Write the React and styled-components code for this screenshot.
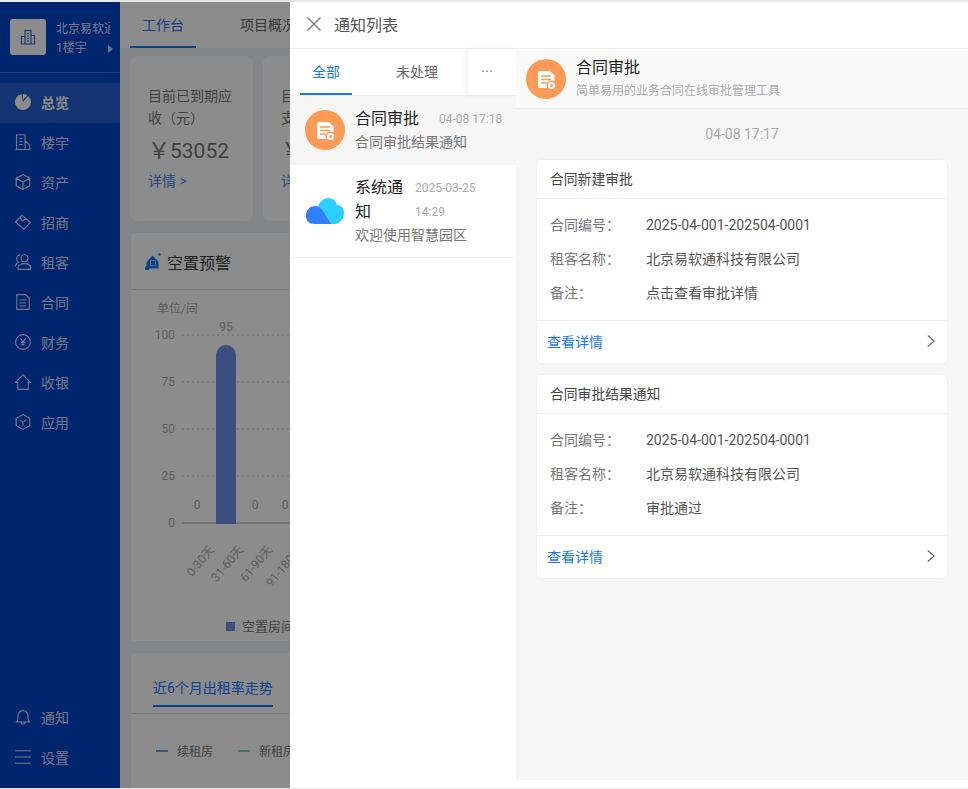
import React from "react";
import styled, { createGlobalStyle } from "styled-components";

const Global = createGlobalStyle`
  html, body { margin: 0; padding: 0; background: #fff; }
  body { font-family: Roboto, "Noto Sans CJK SC", sans-serif; font-size: 14px; color: #333; }
  * { box-sizing: border-box; }
`;

const Page = styled.div`
  position: relative;
  width: 968px;
  height: 789px;
  overflow: hidden;
  background: #fff;
  border-top: 2px solid #e8e8e8;
  border-bottom: 1px solid #e8e8e8;
`;
const Shell = styled.div`
  display: flex;
  height: 100%;
  background: #f1f2f4;
`;
const Sidebar = styled.aside`
  flex: none;
  width: 120px;
  display: flex;
  flex-direction: column;
  background: #0044ca;
  color: rgba(255, 255, 255, 0.82);
`;
const Org = styled.div`
  height: 71px;
  flex: none;
  display: flex;
  gap: 10px;
  padding: 17px 0 0 10px;
  border-bottom: 1px solid rgba(255, 255, 255, 0.25);
  margin-bottom: 10px;
`;
const OrgLogo = styled.div`
  flex: none;
  width: 36px;
  height: 36px;
  border-radius: 3px;
  background: #fff;
  color: #1a5fd0;
  display: flex;
  align-items: center;
  justify-content: center;
`;
const OrgText = styled.div`
  width: 54px;
  font-size: 12px;
  line-height: 20px;
  display: flex;
  flex-direction: column;
  overflow: hidden;
  white-space: nowrap;
`;
const OrgSub = styled.div`
  margin-top: -1px;
`;
const Caret = styled.i`
  position: absolute;
  left: 108px;
  top: 43px;
  width: 0;
  height: 0;
  border-left: 5px solid rgba(255, 255, 255, 0.75);
  border-top: 4px solid transparent;
  border-bottom: 4px solid transparent;
`;
const NavRow = styled.div`
  height: 40px;
  flex: none;
  display: flex;
  align-items: center;
  gap: 10px;
  padding: 0 0 2px 15px;
  font-size: 14px;
  font-weight: ${(p) => (p.$active ? 700 : 400)};
  color: ${(p) => (p.$active ? "#fff" : "inherit")};
  background: ${(p) => (p.$active ? "rgba(255,255,255,.14)" : "transparent")};
`;
const NavSpacer = styled.div`
  flex: 1;
`;
const NavBottom = styled.div`
  padding-bottom: 10px;
`;
const Main = styled.main`
  flex: none;
  width: 170px;
  overflow: hidden;
`;
const TopTabs = styled.div`
  height: 46px;
  width: 420px;
  display: flex;
  padding-left: 10px;
  background: #fff;
`;
const TopTab = styled.div`
  flex: none;
  width: ${(p) => p.$w}px;
  text-align: center;
  line-height: 46px;
  margin-right: ${(p) => p.$mr || 0}px;
  font-size: 14px;
  color: ${(p) => (p.$active ? "#1f74f0" : "#666")};
  border-bottom: 2px solid ${(p) => (p.$active ? "#1677ff" : "transparent")};
`;
const Stats = styled.div`
  display: flex;
  gap: 10px;
  padding: 8px 0 12px 10px;
`;
const StatCard = styled.div`
  flex: none;
  width: 123px;
  height: 165px;
  border-radius: 8px;
  background: #fff;
  padding: 29px 0 0 18px;
`;
const StatLabel = styled.div`
  width: 90px;
  font-size: 14px;
  line-height: 22px;
  color: #777;
`;
const StatValue = styled.div`
  font-size: 21px;
  line-height: 30px;
  margin-top: 7px;
  color: #777;
  white-space: nowrap;
  &::first-letter { font-size: 22px; }
`;
const StatLink = styled.div`
  font-size: 14px;
  line-height: 22px;
  margin-top: 4px;
  color: #3d86f5;
`;
const Panel = styled.section`
  width: 420px;
  height: ${(p) => p.$h}px;
  margin: 0 0 12px 11px;
  border-radius: 4px;
  background: #fff;
  overflow: hidden;
`;
const PanelHead = styled.div`
  height: 57px;
  display: flex;
  align-items: center;
  gap: 6px;
  padding: 2px 0 0 14px;
  font-size: 16px;
  color: #3c3c3c;
  border-bottom: 1px solid #e4e4e4;
`;
const PanelTabs = styled.div`
  height: 61px;
  padding: 18px 0 0 22px;
  border-bottom: 1px solid #e4e4e4;
`;
const PanelTab = styled.span`
  display: inline-block;
  height: 36px;
  line-height: 34px;
  font-size: 14px;
  color: #1677ff;
  border-bottom: 2px solid #1677ff;
`;
const LineLegend = styled.div`
  display: flex;
  gap: 25px;
  padding: 28px 0 0 25px;
  font-size: 12px;
  color: #777;
`;
const LegendItem = styled.span`
  display: flex;
  align-items: center;
  gap: 9px;
  white-space: nowrap;
  &::before {
    content: "";
    width: 12px;
    height: 2px;
    background: ${(p) => p.$c};
  }
`;
const Scrim = styled.div`
  position: absolute;
  inset: 0;
  background: rgba(0, 0, 0, 0.45);
`;
const Drawer = styled.div`
  position: absolute;
  top: 0;
  bottom: 0;
  left: 290px;
  right: 0;
  display: flex;
  flex-direction: column;
  background: #fff;
`;
const DrawerHead = styled.header`
  height: 47px;
  flex: none;
  display: flex;
  align-items: center;
  gap: 13px;
  padding: 0 0 2px 17px;
  border-bottom: 1px solid #eee;
  font-size: 16px;
  color: #555;
  svg { color: #777; }
`;
const DrawerBody = styled.div`
  flex: 1;
  min-height: 0;
  display: flex;
`;
const ListCol = styled.div`
  flex: none;
  width: 226px;
`;
const TabBar = styled.div`
  height: 47px;
  display: flex;
  border-bottom: 1px solid #eee;
  position: relative;
`;
const ListTab = styled.div`
  flex: none;
  width: ${(p) => p.$w}px;
  margin-left: ${(p) => p.$ml || 0}px;
  text-align: center;
  line-height: 46px;
  height: 46px;
  font-size: 14px;
  color: ${(p) => (p.$active ? "#1677ff" : "#666")};
  border-bottom: 2px solid ${(p) => (p.$active ? "#1677ff" : "transparent")};
`;
const MoreTab = styled.div`
  position: absolute;
  right: 0;
  top: 0;
  bottom: 0;
  width: 48px;
  padding-right: 10px;
  text-align: center;
  line-height: 47px;
  font-size: 15px;
  color: #777;
  background: #fff;
  box-shadow: -3px 0 5px rgba(0, 0, 0, 0.05);
`;
const Item = styled.div`
  display: flex;
  align-items: ${(p) => (p.$tall ? "center" : "flex-start")};
  gap: ${(p) => (p.$tall ? 11 : 10)}px;
  height: ${(p) => p.$h}px;
  padding: ${(p) => (p.$tall ? "0 0 0 16px" : "14px 0 0 15px")};
  background: ${(p) => (p.$active ? "#f6f6f6" : "#fff")};
  border-bottom: ${(p) => (p.$active ? "0" : "1px solid #f2f2f2")};
`;
const ItemText = styled.div`
  flex: 1;
  min-width: 0;
  margin-top: ${(p) => p.$mt || 0}px;
`;
const ItemTop = styled.div`
  display: flex;
  align-items: flex-start;
`;
const ItemTitle = styled.div`
  flex: none;
  width: ${(p) => p.$w}px;
  font-size: 16px;
  line-height: 24px;
  color: #222;
`;
const ItemDate = styled.div`
  width: ${(p) => p.$w}px;
  font-size: 12px;
  line-height: 24px;
  color: #aaa;
  white-space: ${(p) => (p.$wrap ? "normal" : "nowrap")};
`;
const ItemSub = styled.div`
  font-size: 14px;
  line-height: 22px;
  color: #777;
  white-space: nowrap;
`;
const Avatar = styled.div`
  flex: none;
  width: 40px;
  height: 40px;
  border-radius: 50%;
  background: #ff9a57;
  display: flex;
`;
const CloudBox = styled.div`
  flex: none;
  display: flex;
`;
const Detail = styled.div`
  flex: 1;
  display: flex;
  flex-direction: column;
  margin-bottom: 8px;
  background: #f6f6f6;
`;
const DetailHead = styled.div`
  height: 60px;
  flex: none;
  display: flex;
  align-items: center;
  gap: 10px;
  padding-left: 10px;
  background: #fafafa;
  border-bottom: 1px solid #eee;
`;
const DetailCopy = styled.div`
  padding-top: 2px;
`;
const DetailTitle = styled.div`
  font-size: 16px;
  line-height: 20px;
  color: #222;
  margin-bottom: 3px;
`;
const DetailSub = styled.div`
  font-size: 12px;
  line-height: 20px;
  color: #aaa;
`;
const Stamp = styled.div`
  text-align: center;
  font-size: 14px;
  line-height: 20px;
  color: #aaa;
  margin: 15px 0 16px;
`;
const Cards = styled.div`
  display: flex;
  flex-direction: column;
  gap: 12px;
  padding: 0 21px;
`;
const Card = styled.article`
  height: 203px;
  border-radius: 5px;
  background: #fff;
  box-shadow: 0 0 2px rgba(0, 0, 0, 0.08);
  display: flex;
  flex-direction: column;
`;
const CardTitle = styled.div`
  height: 39px;
  flex: none;
  padding-left: 13px;
  line-height: 38px;
  font-size: 13.8px;
  color: #444;
  border-bottom: 1px solid #efefef;
`;
const CardRows = styled.div`
  flex: 1;
  padding: 9px 13px 0;
  border-bottom: 1px solid #efefef;
`;
const Row = styled.div`
  display: flex;
  height: 34px;
  line-height: 34px;
  font-size: 14px;
`;
const RowLabel = styled.div`
  flex: none;
  width: 96px;
  color: #777;
`;
const RowValue = styled.div`
  color: #555;
`;
const CardFoot = styled.div`
  height: 42px;
  flex: none;
  display: flex;
  align-items: center;
  justify-content: space-between;
  padding: 0 12px 2px 10px;
  font-size: 14px;
  color: #1677ff;
  svg { color: #666; }
`;

const line = { fill: "none", stroke: "currentColor", strokeWidth: 1.1 };
const Ico = ({ children }) => (
  <svg width="16" height="16" viewBox="0 0 16 16" {...line}>{children}</svg>
);
const PieIcon = () => (
  <svg width="16" height="16" viewBox="0 0 16 16">
    <path d="M8 8 L13 1.900 A8 8 0 1 1 3 1.800 A8 8 0 0 1 6.500 .2 Z" fill="currentColor" />
    <path d="M8 0 A8 8 0 0 1 12.200 1.200 L8 6 Z" fill="currentColor" />
  </svg>
);
const BuildingIcon = () => <Ico><path d="M.5 15.500h15M1.500 15.500V.7h8.600v14.800M10.100 7l4.600 4v4.500M4 4.500h3.600M4 7.500h3.600M4 10.500h3.600" /></Ico>;
const BoxIcon = () => <Ico><path d="M8 .6 14.800 4.200v7.600L8 15.400 1.200 11.800V4.200ZM1.200 4.200 8 8l6.800-3.800M8 8v7.400" /></Ico>;
const TagIcon = () => <Ico><path d="M.5 8 7 1.300 15.500 8.300 9 15.200ZM5 3.400 7.200 7l3.700-2.300" /></Ico>;
const UsersIcon = () => (
  <Ico>
    <circle cx="9.500" cy="4.300" r="3.500" />
    <path d="M3 15.400v-1.900C3 11 6 9.600 9.500 9.600s6 1.400 6 3.900v1.900ZM5.200.9C3 1.300 1.700 3 1.700 4.800c0 1.400.7 2.500 1.700 3.200C1.500 9 .5 10.500.5 12.600" />
  </Ico>
);
const DocIcon = () => <Ico><path d="M1.800.6h8.700L14.200 4v11.400H1.800ZM4.500 6H11M4.500 9H11M4.500 12H11" /></Ico>;
const YenIcon = () => (
  <Ico>
    <circle cx="8" cy="8" r="7.400" />
    <path d="M5.400 4.400 8 8l2.600-3.600M8 8v3.800M5.600 8.400h4.800M5.600 10.200h4.800" />
  </Ico>
);
const HouseIcon = () => <Ico><path d="M.6 8.400 8 .8l7.400 7.600h-2.200v7H2.800v-7Z" /></Ico>;
const HexIcon = () => <Ico><path d="M8 .6 14.800 4.300v7.400L8 15.400 1.200 11.700V4.300ZM4.600 5.800 8 8.200l3.400-2.400M8 8.200v3.600" /></Ico>;
const BellIcon = () => <Ico><path d="M1.500 13C3 11.500 3 10 3 7c0-3.500 2-5.200 5-5.200S13 3.500 13 7c0 3 0 4.500 1.500 6ZM6 13.500c0 2 4 2 4 0M8 .4v1.400" /></Ico>;
const MenuIcon = () => <Ico><path d="M0 1.700h16M0 8h16M0 14.300h16" /></Ico>;
const OrgIcon = () => <Ico><path d="M.5 15h15M1.500 15V7.500h3.600M5 15V1.500h6V15M11 6.500h3.500V15M7 4.500h2M7 7h2M7 9.500h2M7 12h2" /></Ico>;
const CloseIcon = () => (
  <svg width="14" height="14" viewBox="0 0 14 14" fill="none" stroke="currentColor" strokeWidth="1.300">
    <path d="M.5.5l13 13M13.500.5l-13 13" />
  </svg>
);
const Chevron = () => (
  <svg width="8" height="12" viewBox="0 0 8 12" fill="none" stroke="currentColor" strokeWidth="1.200">
    <path d="M.8.5 7.200 6 .8 11.500" />
  </svg>
);
const ContractIcon = () => (
  <svg width="40" height="40" viewBox="0 0 40 40">
    <path d="M14 12h10l4.500 4.500V29H14a2 2 0 0 1-2-2V14a2 2 0 0 1 2-2Z" fill="#fff" />
    <path d="M15 17h10M15 20.500h10M15 24h6" stroke="#ff9a57" strokeWidth="1.600" />
    <circle cx="25.500" cy="26.500" r="5" fill="#ff9a57" />
    <circle cx="25.500" cy="26.500" r="3.600" fill="#fff" />
    <circle cx="25.500" cy="26.500" r="1.500" fill="#ff9a57" />
  </svg>
);
const CloudIcon = () => (
  <svg width="38" height="27" viewBox="0 0 38 27">
    <path d="M12 8C14 3 18 0 22 0c5 0 8 3 9 7 4 0 7 3.500 7 8 0 6-4 11-10 11h-4Z" fill="#2cd0ff" />
    <path d="M0 18c0-6 4-10 9-10 4 0 6 2 8 5l8 13H8c-5 0-8-3.500-8-8Z" fill="#2f7fff" />
  </svg>
);
const VacancyIcon = () => (
  <svg width="16" height="18" viewBox="0 0 16 18">
    <path d="M1.500 9.500 7.500 2.500l6 6v7H5l-1.500 1.500H1.500A1.500 1.500 0 0 1 0 15.500C0 14 1 13.500 1.500 13Z" fill="#1677ff" />
    <rect x="5.500" y="7.500" width="5" height="5" fill="none" stroke="#bcd6ff" strokeWidth=".8" />
    <circle cx="14.500" cy="1.500" r="1.200" fill="#1677ff" />
  </svg>
);

const nav = [
  ["总览", <PieIcon />],
  ["楼宇", <BuildingIcon />],
  ["资产", <BoxIcon />],
  ["招商", <TagIcon />],
  ["租客", <UsersIcon />],
  ["合同", <DocIcon />],
  ["财务", <YenIcon />],
  ["收银", <HouseIcon />],
  ["应用", <HexIcon />],
];

const ticks = [[100, 333], [75, 380], [50, 427], [25, 474], [0, 521]];
const zeros = [197, 255, 285];
const cats = [["0-30天", 197], ["31-60天", 226], ["61-90天", 255], ["91-180天", 285]];

const VacancyChart = () => (
  <svg display="block" width="420" height="351" viewBox="131 290 420 351" fontFamily="Roboto, Noto Sans CJK SC, sans-serif" fontSize="12" fill="#aaa">
    <text x="157" y="313">单位/间</text>
    {ticks.map(([v, y]) => (
      <g key={v}>
        <text x="175" y={y + 6} textAnchor="end">{v}</text>
        <line x1="182" x2="551" y1={y + 2} y2={y + 2} stroke={v === 0 ? "#aaa" : "#c8c8c8"} strokeDasharray={v === 0 ? "none" : "2 3"} />
      </g>
    ))}
    <path d="M216 524V355a10 10 0 0 1 20 0V524Z" fill="#6a8fe8" />
    <text x="226" y="331" textAnchor="middle">95</text>
    {zeros.map((x) => (
      <text key={x} x={x} y="509" textAnchor="middle">0</text>
    ))}
    {cats.map(([c, x]) => (
      <text key={c} transform={`translate(${x + 18} 550) rotate(-50)`} textAnchor="end">{c}</text>
    ))}
    <rect x="226" y="622" width="9" height="9" fill="#6a8fe8" />
    <text x="242" y="631" fontSize="13" fill="#777">空置房间</text>
  </svg>
);

const cards = [
  { title: "合同新建审批", tenant: "北京易软通科技有限公司", note: "点击查看审批详情" },
  { title: "合同审批结果通知", tenant: "北京易软通科技有限公司", note: "审批通过" },
];

export default function App() {
  return (
    <Page>
      <Global />
      <Shell>
        <Sidebar>
          <Org>
            <OrgLogo><OrgIcon /></OrgLogo>
            <OrgText>
              <span>北京易软通</span>
              <OrgSub>1楼宇</OrgSub>
            </OrgText>
            <Caret />
          </Org>
          {nav.map(([t, icon], i) => (
            <NavRow key={t} $active={i === 0}>{icon}{t}</NavRow>
          ))}
          <NavSpacer />
          <NavBottom>
            <NavRow><BellIcon />通知</NavRow>
            <NavRow><MenuIcon />设置</NavRow>
          </NavBottom>
        </Sidebar>
        <Main>
          <TopTabs>
            <TopTab $active $w={66} $mr={22}>工作台</TopTab>
            <TopTab $w={100}>项目概况</TopTab>
          </TopTabs>
          <Stats>
            <StatCard>
              <StatLabel>目前已到期应收（元）</StatLabel>
              <StatValue>￥53052</StatValue>
              <StatLink>详情 &gt;</StatLink>
            </StatCard>
            <StatCard>
              <StatLabel>目前已到期应支付（元）</StatLabel>
              <StatValue>￥0</StatValue>
              <StatLink>详情 &gt;</StatLink>
            </StatCard>
          </Stats>
          <Panel $h={408}>
            <PanelHead><VacancyIcon />空置预警</PanelHead>
            <VacancyChart />
          </Panel>
          <Panel $h={200}>
            <PanelTabs><PanelTab>近6个月出租率走势</PanelTab></PanelTabs>
            <LineLegend>
              <LegendItem $c="#6a8fe8">续租房</LegendItem>
              <LegendItem $c="#66e0a8">新租房</LegendItem>
            </LineLegend>
          </Panel>
        </Main>
      </Shell>
      <Scrim />
      <Drawer>
        <DrawerHead><CloseIcon />通知列表</DrawerHead>
        <DrawerBody>
          <ListCol>
            <TabBar>
              <ListTab $active $w={52} $ml={10}>全部</ListTab>
              <ListTab $w={62} $ml={34}>未处理</ListTab>
              <MoreTab>···</MoreTab>
            </TabBar>
            <Item $active $h={69}>
              <Avatar><ContractIcon /></Avatar>
              <ItemText $mt={-3}>
                <ItemTop>
                  <ItemTitle $w={84}>合同审批</ItemTitle>
                  <ItemDate $w={70}>04-08 17:18</ItemDate>
                </ItemTop>
                <ItemSub>合同审批结果通知</ItemSub>
              </ItemText>
            </Item>
            <Item $tall $h={93}>
              <CloudBox><CloudIcon /></CloudBox>
              <ItemText>
                <ItemTop>
                  <ItemTitle $w={60}>系统通知</ItemTitle>
                  <ItemDate $w={64} $wrap>2025-03-25 14:29</ItemDate>
                </ItemTop>
                <ItemSub>欢迎使用智慧园区</ItemSub>
              </ItemText>
            </Item>
          </ListCol>
          <Detail>
            <DetailHead>
              <Avatar><ContractIcon /></Avatar>
              <DetailCopy>
                <DetailTitle>合同审批</DetailTitle>
                <DetailSub>简单易用的业务合同在线审批管理工具</DetailSub>
              </DetailCopy>
            </DetailHead>
            <Stamp>04-08 17:17</Stamp>
            <Cards>
              {cards.map((c) => (
                <Card key={c.title}>
                  <CardTitle>{c.title}</CardTitle>
                  <CardRows>
                    <Row><RowLabel>合同编号：</RowLabel><RowValue>2025-04-001-202504-0001</RowValue></Row>
                    <Row><RowLabel>租客名称：</RowLabel><RowValue>{c.tenant}</RowValue></Row>
                    <Row><RowLabel>备注：</RowLabel><RowValue>{c.note}</RowValue></Row>
                  </CardRows>
                  <CardFoot>查看详情<Chevron /></CardFoot>
                </Card>
              ))}
            </Cards>
          </Detail>
        </DrawerBody>
      </Drawer>
    </Page>
  );
}
